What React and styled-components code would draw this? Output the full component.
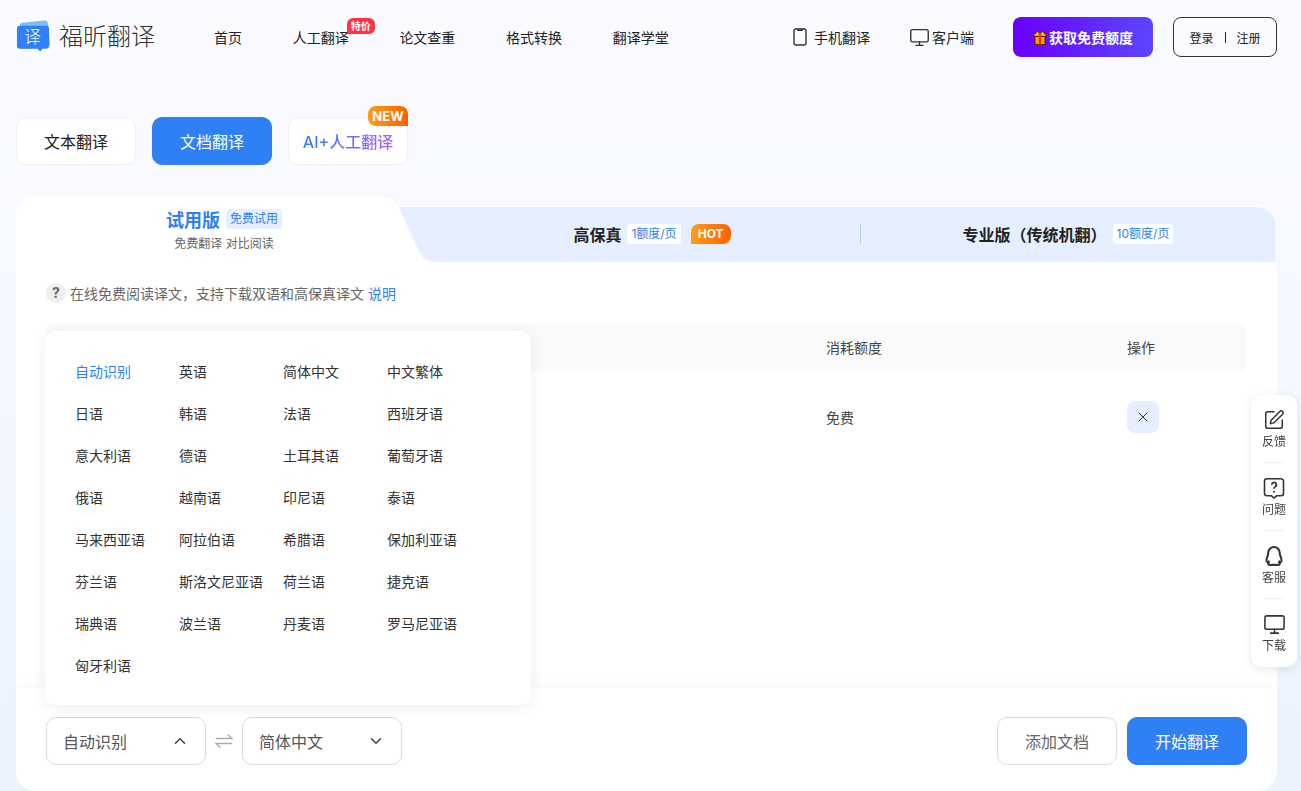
import styled, { createGlobalStyle } from "styled-components";
import { Monitor, SquarePen, X, ChevronUp, ChevronDown } from "lucide-react";
import { RiQqLine } from "react-icons/ri";

const blue = "#2f7ff5";

const GlobalStyle = createGlobalStyle`
  * { box-sizing: border-box; }
  html, body { margin: 0; height: 100%; }
  body {
    overflow: hidden;
    font-family: Inter, "Noto Sans CJK SC", sans-serif;
    color: #333;
    background: linear-gradient(180deg, #fafbff 0%, #f6f9ff 35%, #ebf3ff 100%);
  }
`;

const Page = styled.div`
  height: 791px;
  padding: 0 24px 0 16px;
`;

/* header */
const Header = styled.header`
  height: 74px;
  display: flex;
  align-items: center;
`;
const Logo = styled.div`
  width: 139px;
  display: flex;
  align-items: center;
  gap: 8px;
  flex: none;
`;
const LogoText = styled.span`
  font-size: 24px;
  line-height: 32px;
  font-weight: 300;
  color: #333;
  white-space: nowrap;
`;
const Nav = styled.nav`
  display: flex;
  gap: 50.7px;
  margin-left: 59px;
  font-size: 14px;
`;
const NavItem = styled.a`
  position: relative;
  color: #222;
  white-space: nowrap;
`;
const PriceBadge = styled.span`
  position: absolute;
  left: 54px;
  top: -9px;
  width: 28px;
  height: 16px;
  border-radius: 6px 6px 6px 0;
  background: #ff3344;
  color: #fff;
  font-size: 10px;
  line-height: 16px;
  font-weight: 700;
  text-align: center;
`;
const HeaderRight = styled.div`
  margin-left: auto;
  display: flex;
  align-items: center;
  font-size: 14px;
`;
const AppLink = styled.a`
  display: flex;
  align-items: center;
  gap: ${(p) => p.$gap}px;
  margin-right: ${(p) => p.$after}px;
  color: #222;
  white-space: nowrap;
`;
const FreeButton = styled.button`
  width: 140px;
  height: 40px;
  margin-right: 20px;
  border: 0;
  border-radius: 8px;
  display: flex;
  align-items: center;
  justify-content: center;
  gap: 2px;
  background: linear-gradient(90deg, #6a00ff, #5b45ff);
  color: #fff;
  font: inherit;
  font-weight: 700;
`;
const LoginBox = styled.div`
  width: 104px;
  height: 40px;
  border: 1px solid #333;
  border-radius: 8px;
  display: flex;
  align-items: center;
  justify-content: center;
  gap: 11px;
  font-size: 12px;
  color: #222;
`;
const LoginSep = styled.span`
  width: 1px;
  height: 11px;
  background: #222;
`;

/* mode buttons */
const Modes = styled.div`
  display: flex;
  gap: 16px;
  margin-top: 43px;
`;
const ModeButton = styled.button`
  position: relative;
  width: 120px;
  height: 48px;
  border-radius: 10px;
  border: 1px solid ${(p) => (p.$active ? blue : "#f0f1f4")};
  background: ${(p) => (p.$active ? blue : "#fff")};
  color: ${(p) => (p.$active ? "#fff" : "#222")};
  font: inherit;
  font-size: 16px;
  padding: 0;
`;
const GradientText = styled.span`
  font-weight: 500;
  background: linear-gradient(90deg, #2f7ff5, #a860ff);
  -webkit-background-clip: text;
  background-clip: text;
  color: transparent;
`;
const NewBadge = styled.span`
  position: absolute;
  right: -1px;
  top: -12px;
  width: 40px;
  height: 20px;
  border-radius: 8px 8px 0 8px;
  background: linear-gradient(90deg, #ff9d17, #ff6000);
  color: #fff;
  font-size: 13px;
  line-height: 20px;
  font-weight: 700;
`;

/* card */
const Card = styled.section`
  height: 585px;
  margin-top: 41px;
  display: flex;
  flex-direction: column;
  background: #fff;
  border-radius: 20px;
`;
const TabStrip = styled.div`
  flex: none;
  height: 56px;
  display: flex;
  background: #e5efff;
  border-top: 1px solid #fff;
  border-right: 1px solid #fff;
  border-radius: 20px 20px 0 0;
`;
const ActiveTab = styled.div`
  flex: 1;
  height: 66px;
  margin-top: -11px;
  padding-top: 11px;
  background: #fff;
  clip-path: path("M0 66 V20 Q0 0 20 0 H361 Q378 0 384 14 L401 51 Q406 66 420 66 Z");
  display: flex;
  flex-direction: column;
  align-items: center;
`;
const ActiveTitle = styled.div`
  display: flex;
  align-items: center;
  gap: 6px;
  height: 24px;
`;
const TrialName = styled.span`
  font-size: 18px;
  font-weight: 700;
  color: ${blue};
`;
const TrialTag = styled.span`
  height: 20px;
  padding: 0 4px;
  border-radius: 4px;
  background: #e5efff;
  color: ${blue};
  font-size: 12px;
  line-height: 20px;
`;
const TabSub = styled.div`
  margin-top: 5px;
  font-size: 12px;
  line-height: 16px;
  color: #666;
`;
const Tab = styled.div`
  position: relative;
  flex: 1;
  display: flex;
  align-items: center;
  justify-content: center;
  gap: 6px;
  padding-left: ${(p) => p.$shift || 0}px;
  padding-bottom: 2px;
`;
const TabName = styled.span`
  font-size: 16px;
  font-weight: 600;
  color: #222;
  white-space: nowrap;
`;
const CostTag = styled.span`
  height: 20px;
  padding: 0 4px;
  border-radius: 4px;
  background: #fff;
  color: ${blue};
  font-size: 12px;
  line-height: 20px;
  white-space: nowrap;
`;
const HotBadge = styled.span`
  width: 40px;
  height: 20px;
  margin-left: 4px;
  border-radius: 8px 8px 8px 0;
  background: linear-gradient(90deg, #ff9d17, #ff6000);
  color: #fff;
  font-size: 12px;
  line-height: 20px;
  font-weight: 700;
  text-align: center;
`;
const TabDivider = styled.span`
  position: absolute;
  left: 0;
  top: 17px;
  width: 1px;
  height: 20px;
  background: #b4cdf2;
`;

const Main = styled.div`
  flex: 1;
  padding: 21px 30px 0;
`;
const InfoRow = styled.div`
  display: flex;
  align-items: center;
  gap: 4px;
  height: 20px;
  font-size: 14px;
  color: #666;
`;
const HelpDot = styled.span`
  width: 20px;
  height: 20px;
  border-radius: 50%;
  background: #eee;
  color: #666;
  font-size: 14px;
  font-weight: 700;
  line-height: 20px;
  text-align: center;
`;
const InfoLink = styled.a`
  color: ${blue};
`;
const TableRow = styled.div`
  display: grid;
  grid-template-columns: 780px 301px 1fr;
  align-items: center;
  font-size: 14px;
`;
const TableHead = styled(TableRow)`
  height: 48px;
  margin-top: 20px;
  border-radius: 8px;
  background: #fafafa;
  color: #444;
`;
const TableBody = styled(TableRow)`
  padding: 30px 0;
  color: #444;
`;
const RemoveButton = styled.button`
  width: 32px;
  height: 32px;
  padding: 0;
  border: 0;
  border-radius: 8px;
  background: #e5efff;
  color: #333;
  display: flex;
  align-items: center;
  justify-content: center;
`;

/* footer */
const Footer = styled.div`
  flex: none;
  height: 105px;
  padding: 30px 30px 0;
  display: flex;
  align-items: flex-start;
  border-top: 1px solid #f7f7f7;
  box-shadow: 0 -6px 12px rgba(0, 0, 0, 0.012);
`;
const SelectWrap = styled.div`
  position: relative;
`;
const Select = styled.div`
  width: 160px;
  height: 48px;
  padding: 0 16px;
  border: 1px solid #dcdcdc;
  border-radius: 10px;
  display: flex;
  align-items: center;
  justify-content: space-between;
  font-size: 16px;
  color: #555;
`;
const SwapIcon = styled.div`
  width: 36px;
  height: 48px;
  display: flex;
  align-items: center;
  justify-content: center;
`;
const Actions = styled.div`
  margin-left: auto;
  display: flex;
  gap: 10px;
`;
const ActionButton = styled.button`
  width: 120px;
  height: 48px;
  padding: 0;
  border-radius: 10px;
  border: 1px solid ${(p) => (p.$primary ? blue : "#dcdcdc")};
  background: ${(p) => (p.$primary ? blue : "#fff")};
  color: ${(p) => (p.$primary ? "#fff" : "#666")};
  font: inherit;
  font-size: 16px;
`;

/* language menu */
const LangMenu = styled.div`
  position: absolute;
  left: -1px;
  bottom: 60px;
  width: 486px;
  height: 374px;
  padding: 19px 30px;
  display: grid;
  grid-template-columns: repeat(4, 104px);
  grid-auto-rows: 42px;
  align-items: center;
  border-radius: 10px;
  background: #fff;
  box-shadow: 0 2px 16px rgba(0, 0, 0, 0.07);
  font-size: 14px;
`;
const LangItem = styled.div`
  color: ${(p) => (p.$active ? blue : "#333")};
  white-space: nowrap;
`;

/* side rail */
const SideRail = styled.aside`
  position: fixed;
  right: 4px;
  top: 395px;
  width: 46px;
  height: 272px;
  padding: 0 3px;
  border-radius: 10px;
  background: #fff;
  box-shadow: 0 2px 10px rgba(0, 0, 0, 0.1);
  display: flex;
  flex-direction: column;
`;
const RailItem = styled.div`
  height: 68px;
  display: flex;
  flex-direction: column;
  align-items: center;
  padding-top: 13px;
  gap: 1px;
  font-size: 12px;
  line-height: 18px;
  color: #444;
  position: relative;
  &:not(:last-child)::after {
    content: "";
    position: absolute;
    left: 10px;
    right: 10px;
    bottom: 0;
    height: 1px;
    background: #eee;
  }
`;
const RailIcon = styled.span`
  width: 24px;
  height: 24px;
  display: flex;
  align-items: center;
  justify-content: center;
  color: #333;
`;

const languages = [
  "自动识别", "英语", "简体中文", "中文繁体",
  "日语", "韩语", "法语", "西班牙语",
  "意大利语", "德语", "土耳其语", "葡萄牙语",
  "俄语", "越南语", "印尼语", "泰语",
  "马来西亚语", "阿拉伯语", "希腊语", "保加利亚语",
  "芬兰语", "斯洛文尼亚语", "荷兰语", "捷克语",
  "瑞典语", "波兰语", "丹麦语", "罗马尼亚语",
  "匈牙利语",
];

const LogoMark = () => (
  <svg width="36" height="34" viewBox="0 0 36 34">
    <rect x="5" y="1" width="29" height="27" rx="3" fill="#7fbdf6" transform="rotate(-6 20 15)" />
    <path d="M3 6.5h27a3 3 0 0 1 3 3V27a3 3 0 0 1-3 3h-4l-2 3-3-3H3a3 3 0 0 1-3-3V9.500a3 3 0 0 1 3-3z" fill={blue} transform="translate(1 -1)" />
    <text x="17" y="23.500" textAnchor="middle" fontSize="17" fill="#fff" fontFamily='"Noto Sans CJK SC", sans-serif' fontWeight="300">译</text>
  </svg>
);

const PhoneIcon = () => (
  <svg width="14" height="18" viewBox="0 0 14 18" fill="none" stroke="#333" strokeWidth="1.400">
    <rect x="1" y="1" width="12" height="16" rx="2" />
    <path d="M5 1v1.200h4V1" />
  </svg>
);

const GiftIcon = () => (
  <svg width="14" height="15" viewBox="0 0 14 15">
    <path d="M4 .8 7 3.500 10 .8l1.500 2.700H13v3H1v-3h1.500z" fill="#ffb400" stroke="#5a1a00" strokeWidth="1" />
    <rect x="2" y="6.500" width="10" height="8" fill="#ffa800" stroke="#5a1a00" strokeWidth="1" />
    <rect x="5.800" y="3.500" width="2.400" height="11" fill="#e8380d" />
  </svg>
);

const SwapArrows = () => (
  <svg width="18" height="16" viewBox="0 0 18 16" fill="none" stroke="#aaa" strokeWidth="1.300">
    <path d="M1 5.500h16L12.500 1.500" />
    <path d="M17 10.500H1l4.500 4" />
  </svg>
);

const QuestionBubble = () => (
  <svg width="24" height="24" viewBox="0 0 24 24" fill="none" stroke="#333" strokeWidth="1.600">
    <path d="M5 2.800h14a2.500 2.500 0 0 1 2.500 2.500v12a2.500 2.500 0 0 1-2.500 2.500h-4.500L12 22l-2.500-2.200H5a2.500 2.500 0 0 1-2.500-2.500v-12A2.500 2.500 0 0 1 5 2.800z" />
    <path d="M9.800 8.800a2.300 2.300 0 1 1 3.400 2c-.9.500-1.200 1-1.200 2" strokeWidth="1.700" />
    <circle cx="12" cy="15.700" r="1" fill="#333" stroke="none" />
  </svg>
);

const App = () => {
  return (
    <Page>
      <GlobalStyle />
      <Header>
        <Logo>
          <LogoMark />
          <LogoText>福昕翻译</LogoText>
        </Logo>
        <Nav>
          <NavItem>首页</NavItem>
          <NavItem>
            人工翻译
            <PriceBadge>特价</PriceBadge>
          </NavItem>
          <NavItem>论文查重</NavItem>
          <NavItem>格式转换</NavItem>
          <NavItem>翻译学堂</NavItem>
        </Nav>
        <HeaderRight>
          <AppLink $gap={7} $after={39}>
            <PhoneIcon />
            手机翻译
          </AppLink>
          <AppLink $gap={2} $after={39}>
            <Monitor size={21} strokeWidth={1.6} color="#333" />
            客户端
          </AppLink>
          <FreeButton>
            <GiftIcon />
            获取免费额度
          </FreeButton>
          <LoginBox>
            <span>登录</span>
            <LoginSep />
            <span>注册</span>
          </LoginBox>
        </HeaderRight>
      </Header>

      <Modes>
        <ModeButton>文本翻译</ModeButton>
        <ModeButton $active>文档翻译</ModeButton>
        <ModeButton>
          <GradientText>AI+人工翻译</GradientText>
          <NewBadge>NEW</NewBadge>
        </ModeButton>
      </Modes>

      <Card>
        <TabStrip>
          <ActiveTab>
            <ActiveTitle>
              <TrialName>试用版</TrialName>
              <TrialTag>免费试用</TrialTag>
            </ActiveTitle>
            <TabSub>免费翻译 对比阅读</TabSub>
          </ActiveTab>
          <Tab $shift={12}>
            <TabName>高保真</TabName>
            <CostTag>1额度/页</CostTag>
            <HotBadge>HOT</HotBadge>
          </Tab>
          <Tab>
            <TabDivider />
            <TabName>专业版（传统机翻）</TabName>
            <CostTag>10额度/页</CostTag>
          </Tab>
        </TabStrip>

        <Main>
          <InfoRow>
            <HelpDot>?</HelpDot>
            <span>在线免费阅读译文，支持下载双语和高保真译文</span>
            <InfoLink>说明</InfoLink>
          </InfoRow>
          <TableHead>
            <span />
            <span>消耗额度</span>
            <span>操作</span>
          </TableHead>
          <TableBody>
            <span />
            <span>免费</span>
            <RemoveButton>
              <X size={16} strokeWidth={1.5} />
            </RemoveButton>
          </TableBody>
        </Main>

        <Footer>
          <SelectWrap>
            <Select>
              自动识别
              <ChevronUp size={18} strokeWidth={2} color="#444" />
            </Select>
            <LangMenu>
              {languages.map((name, i) => (
                <LangItem key={name} $active={i === 0}>
                  {name}
                </LangItem>
              ))}
            </LangMenu>
          </SelectWrap>
          <SwapIcon>
            <SwapArrows />
          </SwapIcon>
          <Select>
            简体中文
            <ChevronDown size={18} strokeWidth={2} color="#444" />
          </Select>
          <Actions>
            <ActionButton>添加文档</ActionButton>
            <ActionButton $primary>开始翻译</ActionButton>
          </Actions>
        </Footer>
      </Card>

      <SideRail>
        <RailItem>
          <RailIcon>
            <SquarePen size={22} strokeWidth={1.6} />
          </RailIcon>
          反馈
        </RailItem>
        <RailItem>
          <RailIcon>
            <QuestionBubble />
          </RailIcon>
          问题
        </RailItem>
        <RailItem>
          <RailIcon>
            <RiQqLine size={24} />
          </RailIcon>
          客服
        </RailItem>
        <RailItem>
          <RailIcon>
            <Monitor size={23} strokeWidth={1.6} />
          </RailIcon>
          下载
        </RailItem>
      </SideRail>
    </Page>
  );
};

export default App;
